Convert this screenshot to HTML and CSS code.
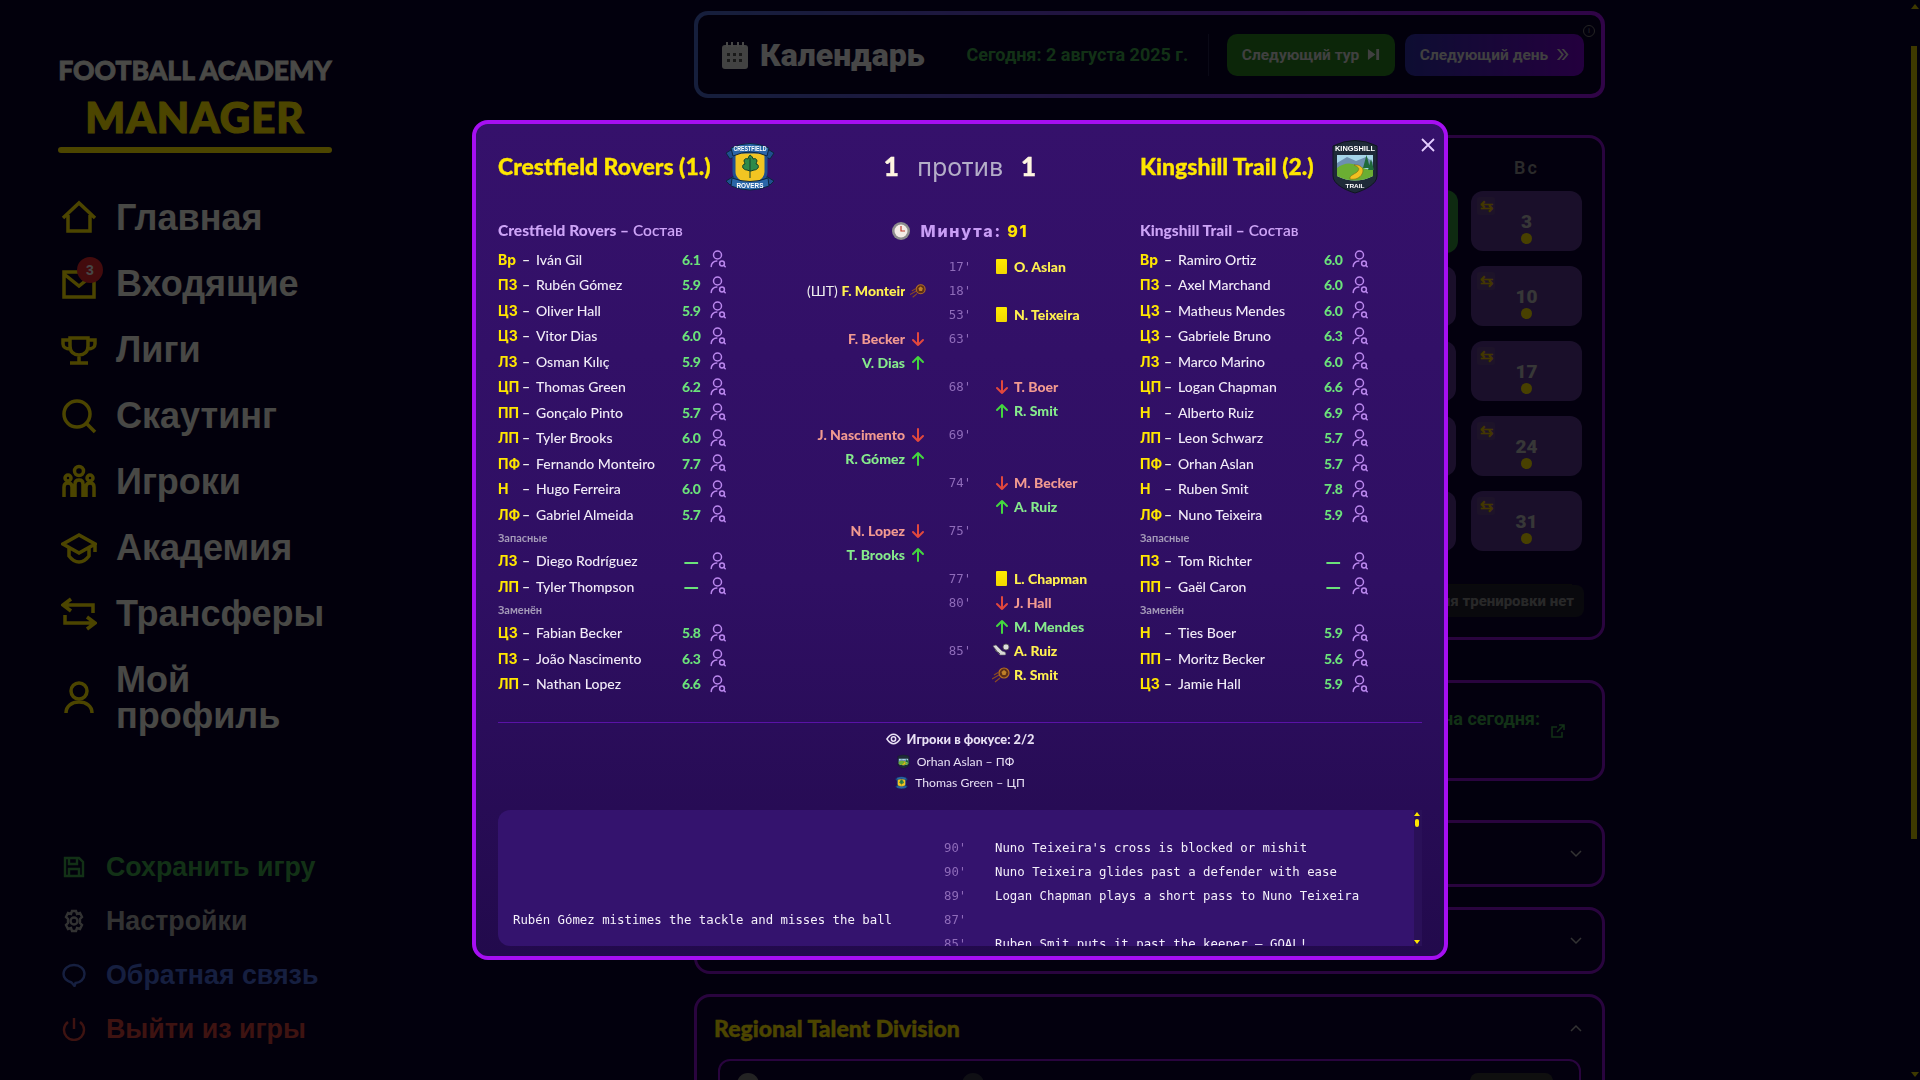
FILE: index.html
```html
<!DOCTYPE html>
<html lang="ru">
<head>
<meta charset="utf-8">
<title>Football Academy Manager</title>
<link rel="stylesheet" href="styles.css">
</head>
<body>
<svg class="defs" width="0" height="0" aria-hidden="true">
  <symbol id="crest-a" viewBox="0 0 50 52">
    <path d="M1 13 9 8v9l-4 2zM49 13l-8-5v9l4 2zM1 41l8-5v6l-4 3zM49 41l-8-5v6l4 3z" fill="#1f4f8f" stroke="#0d2540" stroke-width="1"/>
    <path d="M9 12h32v20c0 8-8 11-16 15C17 43 9 40 9 32z" fill="#f2c522" stroke="#1f4f8f" stroke-width="3"/>
    <path d="M25 15c2 1 3 3 3 4 2-1 4 0 4 2 0 1-1 2-1 3 2 0 3 2 2 4-1 1-2 2-4 2l-3 1-1 0-3-1c-2 0-3-1-4-2-1-2 0-4 2-4 0-1-1-2-1-3 0-2 2-3 4-2 0-1 1-3 2-4z" fill="#2f8a4a" stroke="#14402a" stroke-width="1"/>
    <path d="M25 18v20" stroke="#14402a" stroke-width="1"/>
    <path d="M6 8Q25 -1 44 8l-2 8Q25 8 8 16z" fill="#2a66a8" stroke="#0d2540" stroke-width="1"/>
    <path d="M7 38Q25 45 43 38l1 8Q25 54 6 46z" fill="#2a66a8" stroke="#0d2540" stroke-width="1"/>
  </symbol>
  <symbol id="crest-b" viewBox="0 0 50 56">
    <path d="M3 8Q25 -3 47 8v30c0 8-12 14-22 17C15 52 3 46 3 38z" fill="#1e2a38" stroke="#0f1620" stroke-width="1"/>
    <path d="M7 17h36v21q-18 9-36 0z" fill="#a5d4e8"/>
    <path d="M7 25l10-6 9 4 10-4 7 5v6H7z" fill="#6d8fb0"/>
    <path d="M7 30q10-8 22-2t14 2v8q-18 9-36 0z" fill="#6bae33"/>
    <path d="M33 30l3.500-13 3.500 13zM38 32l3-11 3 11z" fill="#1f6a3a"/>
    <path d="M24 27c4 2 6 3 4 6s-9 4-8 8c5 1 10-1 12-5s1-7-4-9z" fill="#f0c020" stroke="#7a5a10" stroke-width=".5"/>
  </symbol>
  <symbol id="scout" viewBox="0 0 16 18">
    <g fill="none" stroke="#bb88ee" stroke-width="1.5" stroke-linecap="round">
      <circle cx="7.500" cy="5" r="4"/>
      <path d="M1.200 16.500c0-3 2.400-5.500 5.600-5.500"/>
      <circle cx="12" cy="13.500" r="2.400"/>
      <path d="M14 15.500l1.200 1.200"/>
    </g>
  </symbol>
  <symbol id="arrow-down" viewBox="0 0 16 16"><path d="M8 2v12M3 9l5 5 5-5" fill="none" stroke="#e2483d" stroke-width="2" stroke-linecap="round" stroke-linejoin="round"/></symbol>
  <symbol id="arrow-up" viewBox="0 0 16 16"><path d="M8 14V2M3 7l5-5 5 5" fill="none" stroke="#43d63e" stroke-width="2" stroke-linecap="round" stroke-linejoin="round"/></symbol>
  <symbol id="ball" viewBox="0 0 18 16">
    <circle cx="12" cy="6" r="5" fill="#5e2f18" stroke="#b87020" stroke-width="1.200"/>
    <path d="M12 3l2.500 2-1 3h-3l-1-3z" fill="#c08028"/>
    <path d="M7 5 2 8M7 8 0 12M8 11l-5 4" stroke="#8a4a20" stroke-width="1.200" fill="none"/>
  </symbol>
  <symbol id="boot" viewBox="0 0 18 16">
    <path d="M1 3l3-1 6 6 3 1c1 1 1 3 0 3H8z" fill="#d8d8d8" stroke="#666" stroke-width=".6"/>
    <circle cx="14" cy="4" r="3" fill="#ddd" stroke="#555" stroke-width=".8"/>
    <path d="M3 7l2 2M6 9l2 2" stroke="#555" stroke-width="1"/>
  </symbol>
</svg>

<div class="app">
  <aside class="sidebar">
    <div class="logo">
      <div class="logo-top">FOOTBALL ACADEMY</div>
      <div class="logo-main">MANAGER</div>
      <div class="logo-line"></div>
    </div>
    <nav class="nav">
      <a class="nav-item"><svg class="nav-ico" viewBox="0 0 36 36"><path d="M2 18 18 3l16 15M7 15v16h22V15" /></svg><span>Главная</span></a>
      <a class="nav-item"><span class="ico-wrap"><svg class="nav-ico" viewBox="0 0 36 36"><path d="M3 6h30v25H3zM3 8l15 12L33 8"/></svg><span class="badge">3</span></span><span>Входящие</span></a>
      <a class="nav-item"><svg class="nav-ico" viewBox="0 0 36 36"><path d="M9 6h18v8c0 6-4 9-9 9s-9-3-9-9zM9 8H2v4c0 3 3 5 7 5M27 8h7v4c0 3-3 5-7 5M18 23v7M9 31h18"/></svg><span>Лиги</span></a>
      <a class="nav-item"><svg class="nav-ico" viewBox="0 0 36 36"><circle cx="16" cy="16" r="13"/><path d="M26 26l8 8"/></svg><span>Скаутинг</span></a>
      <a class="nav-item"><svg class="nav-ico" viewBox="0 0 36 36"><circle cx="18" cy="7" r="4.500"/><circle cx="7" cy="14" r="3"/><circle cx="29" cy="14" r="3"/><path d="M3 33V23q0-4 4-4t4 4v10M14 33V20q0-4 4-4t4 4v13M25 33V23q0-4 4-4t4 4v10"/></svg><span>Игроки</span></a>
      <a class="nav-item"><svg class="nav-ico" viewBox="0 0 36 36"><path d="M18 5 2 14l16 9 16-9zM8 18v8c3 4 7 6 10 6s7-2 10-6v-8M34 14v8"/></svg><span>Академия</span></a>
      <a class="nav-item"><svg class="nav-ico" viewBox="0 0 36 36"><path d="M10 3 2 9l8 6M3 9h29v8M26 21l8 6-8 6M33 27H4v-8"/></svg><span>Трансферы</span></a>
      <a class="nav-item"><svg class="nav-ico" viewBox="0 0 36 36"><circle cx="18" cy="11" r="8"/><path d="M5 33c0-7 6-11 13-11s13 4 13 11"/></svg><span>Мой<br>профиль</span></a>
    </nav>
    <nav class="nav-bottom">
      <a class="sub-item tone-green"><svg class="sub-ico" viewBox="0 0 24 24"><path d="M3 3h14l4 4v14H3zM7 3v6h8V3M7 21v-7h10v7"/></svg><span>Сохранить игру</span></a>
      <a class="sub-item tone-grey"><svg class="sub-ico" viewBox="0 0 24 24"><circle cx="12" cy="12" r="3.500"/><path d="M10 2h4l1 3 3-1 2 4-2 2v4l2 2-2 4-3-1-1 3h-4l-1-3-3 1-2-4 2-2v-4L4 8l2-4 3 1z"/></svg><span>Настройки</span></a>
      <a class="sub-item tone-blue"><svg class="sub-ico" viewBox="0 0 24 24"><path d="M12 2c6 0 10.500 4 10.500 9s-4.500 9-9 9l-1 3-3-3.500C5 18 1.500 15 1.500 11 1.500 6 6 2 12 2z"/></svg><span>Обратная связь</span></a>
      <a class="sub-item tone-red"><svg class="sub-ico" viewBox="0 0 24 24"><path d="M12 1v11M6 5a10 10 0 1 0 12 0"/></svg><span>Выйти из игры</span></a>
    </nav>
  </aside>

  <main class="main">
    <header class="cal-head">
      <svg class="cal-ico" viewBox="0 0 26 28"><path d="M3 4h20a3 3 0 0 1 3 3v18a3 3 0 0 1-3 3H3a3 3 0 0 1-3-3V7a3 3 0 0 1 3-3z" fill="#ddd"/><path d="M5 1v5M10 1v5M16 1v5M21 1v5" stroke="#eee" stroke-width="2"/><path d="M5 12h3v3H5zM11 12h3v3h-3zM17 12h3v3h-3zM5 18h3v3H5zM11 18h3v3h-3zM17 18h3v3h-3z" fill="#555"/></svg>
      <h1 class="cal-title">Календарь</h1>
      <div class="cal-date">Сегодня: 2 августа 2025 г.</div>
      <div class="cal-sep"></div>
      <button class="btn btn-green">Следующий тур <svg class="btn-ico" viewBox="0 0 14 14"><path d="M1 1l8 6-8 6zM10 1h3v12h-3z"/></svg></button>
      <button class="btn btn-violet">Следующий день <svg class="btn-ico" viewBox="0 0 14 14"><path d="M1 1l5 6-5 6h2.500l5-6-5-6zM6 1l5 6-5 6h2.500l5-6-5-6z"/></svg></button>
      <span class="info">i</span>
    </header>

    <section class="card cal-card">
      <div class="week"><span></span><span></span><span></span><span></span><span></span><span></span><span>Вс</span></div>
      <div class="days">
        <div class="day"></div><div class="day"></div><div class="day"></div><div class="day"></div><div class="day"></div><div class="day day-today"></div><div class="day"><i class="swap">⇆</i><b>3</b><u></u></div>
        <div class="day"></div><div class="day"></div><div class="day"></div><div class="day"></div><div class="day"></div><div class="day"></div><div class="day"><i class="swap">⇆</i><b>10</b><u></u></div>
        <div class="day"></div><div class="day"></div><div class="day"></div><div class="day"></div><div class="day"></div><div class="day"></div><div class="day"><i class="swap">⇆</i><b>17</b><u></u></div>
        <div class="day"></div><div class="day"></div><div class="day"></div><div class="day"></div><div class="day"></div><div class="day"></div><div class="day"><i class="swap">⇆</i><b>24</b><u></u></div>
        <div class="day"></div><div class="day"></div><div class="day"></div><div class="day"></div><div class="day"></div><div class="day"></div><div class="day"><i class="swap">⇆</i><b>31</b><u></u></div>
      </div>
      <div class="no-train">На сегодня тренировки нет</div>
    </section>

    <section class="card today-card">
      <span class="today-text">Матчи на сегодня:</span>
      <svg class="ext-ico" viewBox="0 0 16 16"><path d="M12 9v5H2V4h5M9 2h5v5M14 2 7 9"/></svg>
    </section>
    <section class="card fold-card fold-a"><svg class="chev" viewBox="0 0 12 8"><path d="M1 1l5 5 5-5"/></svg></section>
    <section class="card fold-card fold-b"><svg class="chev" viewBox="0 0 12 8"><path d="M1 1l5 5 5-5"/></svg></section>
    <section class="card region">
      <div class="region-head"><h2>Regional Talent Division</h2><svg class="chev" viewBox="0 0 12 8"><path d="M1 7l5-5 5 5"/></svg></div>
      <div class="region-inner">
        <span class="dot-av"></span><span class="dot-av dot-av2"></span><span class="pill"></span>
      </div>
    </section>
  </main>
  <div class="page-scroll"><span class="ps-up"></span><span class="ps-thumb"></span><span class="ps-down"></span></div>
</div>

<div class="overlay">
  <div class="modal">
    <button class="close" aria-label="Закрыть"><svg viewBox="0 0 16 16"><path d="M2 2l12 12M14 2 2 14"/></svg></button>

    <div class="match-head">
      <div class="team-head"><span class="team-name">Crestfield Rovers (1.)</span>
        <svg class="crest" viewBox="0 0 50 52"><use href="#crest-a" width="50" height="52"/><text x="25" y="11" class="crest-t" font-size="6.400" textLength="33" lengthAdjust="spacingAndGlyphs">CRESTFIELD</text><text x="25" y="48" class="crest-t" font-size="7.400" textLength="27" lengthAdjust="spacingAndGlyphs">ROVERS</text></svg></div>
      <div class="score"><b>1</b><span>против</span><b>1</b></div>
      <div class="team-head"><span class="team-name">Kingshill Trail (2.)</span>
        <svg class="crest crest-k" viewBox="0 0 50 56"><use href="#crest-b" width="50" height="56"/><text x="25" y="13" class="crest-t" font-size="7.600" textLength="40" lengthAdjust="spacingAndGlyphs">KINGSHILL</text><text x="25" y="50" class="crest-t" font-size="5.600" textLength="19" lengthAdjust="spacingAndGlyphs">TRAIL</text></svg></div>
    </div>

    <div class="match-body">
      <div class="lineup">
        <h3><b>Crestfield Rovers –</b> Состав</h3>
        <div class="pl"><em>Вр</em><i>–</i><span>Iván Gil</span><b>6.1</b><svg><use href="#scout"/></svg></div>
        <div class="pl"><em>ПЗ</em><i>–</i><span>Rubén Gómez</span><b>5.9</b><svg><use href="#scout"/></svg></div>
        <div class="pl"><em>ЦЗ</em><i>–</i><span>Oliver Hall</span><b>5.9</b><svg><use href="#scout"/></svg></div>
        <div class="pl"><em>ЦЗ</em><i>–</i><span>Vitor Dias</span><b>6.0</b><svg><use href="#scout"/></svg></div>
        <div class="pl"><em>ЛЗ</em><i>–</i><span>Osman Kılıç</span><b>5.9</b><svg><use href="#scout"/></svg></div>
        <div class="pl"><em>ЦП</em><i>–</i><span>Thomas Green</span><b>6.2</b><svg><use href="#scout"/></svg></div>
        <div class="pl"><em>ПП</em><i>–</i><span>Gonçalo Pinto</span><b>5.7</b><svg><use href="#scout"/></svg></div>
        <div class="pl"><em>ЛП</em><i>–</i><span>Tyler Brooks</span><b>6.0</b><svg><use href="#scout"/></svg></div>
        <div class="pl"><em>ПФ</em><i>–</i><span>Fernando Monteiro</span><b>7.7</b><svg><use href="#scout"/></svg></div>
        <div class="pl"><em>Н</em><i>–</i><span>Hugo Ferreira</span><b>6.0</b><svg><use href="#scout"/></svg></div>
        <div class="pl"><em>ЛФ</em><i>–</i><span>Gabriel Almeida</span><b>5.7</b><svg><use href="#scout"/></svg></div>
        <h4>Запасные</h4>
        <div class="pl"><em>ЛЗ</em><i>–</i><span>Diego Rodríguez</span><b class="none">—</b><svg><use href="#scout"/></svg></div>
        <div class="pl"><em>ЛП</em><i>–</i><span>Tyler Thompson</span><b class="none">—</b><svg><use href="#scout"/></svg></div>
        <h4>Заменён</h4>
        <div class="pl"><em>ЦЗ</em><i>–</i><span>Fabian Becker</span><b>5.8</b><svg><use href="#scout"/></svg></div>
        <div class="pl"><em>ПЗ</em><i>–</i><span>João Nascimento</span><b>6.3</b><svg><use href="#scout"/></svg></div>
        <div class="pl"><em>ЛП</em><i>–</i><span>Nathan Lopez</span><b>6.6</b><svg><use href="#scout"/></svg></div>
      </div>

      <div class="events">
        <div class="minute-title"><svg class="clock" viewBox="0 0 18 18"><circle cx="9" cy="9" r="9" fill="#8d8d8d"/><circle cx="9" cy="9" r="6.500" fill="#f3ece6"/><path d="M9 4v5h4" stroke="#c0392b" stroke-width="1.200" fill="none"/></svg><span>Минута: <b>91</b></span></div>
        <div class="ev-grid">
          <div class="ev-l"></div><div class="ev-m">17'</div><div class="ev-r"><span class="ycard"></span><span class="t-yellow">O. Aslan</span></div>
          <div class="ev-l"><span class="clip"><small>(ШТ) </small><span class="t-yellow">F. Monteiro</span></span><svg class="ev-ico"><use href="#ball"/></svg></div><div class="ev-m">18'</div><div class="ev-r"></div>
          <div class="ev-l"></div><div class="ev-m">53'</div><div class="ev-r"><span class="ycard"></span><span class="t-yellow">N. Teixeira</span></div>
          <div class="ev-l"><span class="t-off">F. Becker</span><svg class="ev-ico"><use href="#arrow-down"/></svg></div><div class="ev-m">63'</div><div class="ev-r"></div>
          <div class="ev-l"><span class="t-on">V. Dias</span><svg class="ev-ico"><use href="#arrow-up"/></svg></div><div class="ev-m"></div><div class="ev-r"></div>
          <div class="ev-l"></div><div class="ev-m">68'</div><div class="ev-r"><svg class="ev-ico"><use href="#arrow-down"/></svg><span class="t-off">T. Boer</span></div>
          <div class="ev-l"></div><div class="ev-m"></div><div class="ev-r"><svg class="ev-ico"><use href="#arrow-up"/></svg><span class="t-on">R. Smit</span></div>
          <div class="ev-l"><span class="t-off">J. Nascimento</span><svg class="ev-ico"><use href="#arrow-down"/></svg></div><div class="ev-m">69'</div><div class="ev-r"></div>
          <div class="ev-l"><span class="t-on">R. Gómez</span><svg class="ev-ico"><use href="#arrow-up"/></svg></div><div class="ev-m"></div><div class="ev-r"></div>
          <div class="ev-l"></div><div class="ev-m">74'</div><div class="ev-r"><svg class="ev-ico"><use href="#arrow-down"/></svg><span class="t-off">M. Becker</span></div>
          <div class="ev-l"></div><div class="ev-m"></div><div class="ev-r"><svg class="ev-ico"><use href="#arrow-up"/></svg><span class="t-on">A. Ruiz</span></div>
          <div class="ev-l"><span class="t-off">N. Lopez</span><svg class="ev-ico"><use href="#arrow-down"/></svg></div><div class="ev-m">75'</div><div class="ev-r"></div>
          <div class="ev-l"><span class="t-on">T. Brooks</span><svg class="ev-ico"><use href="#arrow-up"/></svg></div><div class="ev-m"></div><div class="ev-r"></div>
          <div class="ev-l"></div><div class="ev-m">77'</div><div class="ev-r"><span class="ycard"></span><span class="t-yellow">L. Chapman</span></div>
          <div class="ev-l"></div><div class="ev-m">80'</div><div class="ev-r"><svg class="ev-ico"><use href="#arrow-down"/></svg><span class="t-off">J. Hall</span></div>
          <div class="ev-l"></div><div class="ev-m"></div><div class="ev-r"><svg class="ev-ico"><use href="#arrow-up"/></svg><span class="t-on">M. Mendes</span></div>
          <div class="ev-l"></div><div class="ev-m">85'</div><div class="ev-r"><svg class="ev-ico ev-wide"><use href="#boot"/></svg><span class="t-yellow">A. Ruiz</span></div>
          <div class="ev-l"></div><div class="ev-m"></div><div class="ev-r"><svg class="ev-ico ev-wide"><use href="#ball"/></svg><span class="t-yellow">R. Smit</span></div>
        </div>
      </div>

      <div class="lineup">
        <h3><b>Kingshill Trail –</b> Состав</h3>
        <div class="pl"><em>Вр</em><i>–</i><span>Ramiro Ortiz</span><b>6.0</b><svg><use href="#scout"/></svg></div>
        <div class="pl"><em>ПЗ</em><i>–</i><span>Axel Marchand</span><b>6.0</b><svg><use href="#scout"/></svg></div>
        <div class="pl"><em>ЦЗ</em><i>–</i><span>Matheus Mendes</span><b>6.0</b><svg><use href="#scout"/></svg></div>
        <div class="pl"><em>ЦЗ</em><i>–</i><span>Gabriele Bruno</span><b>6.3</b><svg><use href="#scout"/></svg></div>
        <div class="pl"><em>ЛЗ</em><i>–</i><span>Marco Marino</span><b>6.0</b><svg><use href="#scout"/></svg></div>
        <div class="pl"><em>ЦП</em><i>–</i><span>Logan Chapman</span><b>6.6</b><svg><use href="#scout"/></svg></div>
        <div class="pl"><em>Н</em><i>–</i><span>Alberto Ruiz</span><b>6.9</b><svg><use href="#scout"/></svg></div>
        <div class="pl"><em>ЛП</em><i>–</i><span>Leon Schwarz</span><b>5.7</b><svg><use href="#scout"/></svg></div>
        <div class="pl"><em>ПФ</em><i>–</i><span>Orhan Aslan</span><b>5.7</b><svg><use href="#scout"/></svg></div>
        <div class="pl"><em>Н</em><i>–</i><span>Ruben Smit</span><b>7.8</b><svg><use href="#scout"/></svg></div>
        <div class="pl"><em>ЛФ</em><i>–</i><span>Nuno Teixeira</span><b>5.9</b><svg><use href="#scout"/></svg></div>
        <h4>Запасные</h4>
        <div class="pl"><em>ПЗ</em><i>–</i><span>Tom Richter</span><b class="none">—</b><svg><use href="#scout"/></svg></div>
        <div class="pl"><em>ПП</em><i>–</i><span>Gaël Caron</span><b class="none">—</b><svg><use href="#scout"/></svg></div>
        <h4>Заменён</h4>
        <div class="pl"><em>Н</em><i>–</i><span>Ties Boer</span><b>5.9</b><svg><use href="#scout"/></svg></div>
        <div class="pl"><em>ПП</em><i>–</i><span>Moritz Becker</span><b>5.6</b><svg><use href="#scout"/></svg></div>
        <div class="pl"><em>ЦЗ</em><i>–</i><span>Jamie Hall</span><b>5.9</b><svg><use href="#scout"/></svg></div>
      </div>
    </div>

    <div class="focus">
      <div class="focus-title"><svg viewBox="0 0 16 12"><path d="M1 6c2-3 4.500-5 7-5s5 2 7 5c-2 3-4.500 5-7 5S3 9 1 6z"/><circle cx="8" cy="6" r="2.300"/></svg>Игроки в фокусе: 2/2</div>
      <div class="focus-row focus-first"><svg viewBox="0 0 50 56"><use href="#crest-b" width="50" height="56"/></svg><span>Orhan Aslan – ПФ</span></div>
      <div class="focus-row"><svg viewBox="0 0 50 52"><use href="#crest-a" width="50" height="52"/></svg><span>Thomas Green – ЦП</span></div>
    </div>

    <div class="log">
      <div class="log-rows">
        <div class="lg-l"></div><div class="lg-m">90'</div><div class="lg-r">Nuno Teixeira's cross is blocked or mishit</div>
        <div class="lg-l"></div><div class="lg-m">90'</div><div class="lg-r">Nuno Teixeira glides past a defender with ease</div>
        <div class="lg-l"></div><div class="lg-m">89'</div><div class="lg-r">Logan Chapman plays a short pass to Nuno Teixeira</div>
        <div class="lg-l">Rubén Gómez mistimes the tackle and misses the ball</div><div class="lg-m">87'</div><div class="lg-r"></div>
        <div class="lg-l"></div><div class="lg-m">85'</div><div class="lg-r">Ruben Smit puts it past the keeper — GOAL!</div>
      </div>
      <div class="log-bar"><span class="lb-up"></span><span class="lb-thumb"></span><span class="lb-down"></span></div>
    </div>
  </div>
</div>
</body>
</html>
```

FILE: styles.css
```css
* { box-sizing: border-box; }
html, body { margin: 0; height: 100%; overflow: hidden; }
body { font-family: Roboto, "Liberation Sans", sans-serif; background: #09002e; color: #f0f0e8; }
.defs { position: absolute; }
.crest-t { font-family: "Liberation Sans", sans-serif; font-weight: 700; fill: #fff; text-anchor: middle; }

.app { display: flex; height: 1080px; }

/* Sidebar */
.sidebar { width: 390px; flex: none; display: flex; flex-direction: column; padding: 53px 58px 24px; background: #07002a; }
.logo { text-align: center; }
.logo-top { font-family: Lato, sans-serif; font-weight: 900; font-size: 26.500px; line-height: 34px; white-space: nowrap; -webkit-text-stroke: .8px #f4f4ec; color: #f4f4ec; }
.logo-main { font-family: Lato, sans-serif; font-weight: 900; font-size: 42px; line-height: 48px; margin-top: 6px; letter-spacing: 1px; -webkit-text-stroke: 1.200px #ffe600; color: #ffe600; }
.logo-line { height: 6px; margin-top: 6px; border-radius: 3px; background: #ffe600; }
.nav { margin-top: 32px; }
.nav-item { display: flex; align-items: center; gap: 19px; padding: 15px 0 15px 3px; font-family: "Liberation Sans", sans-serif; font-size: 36px; line-height: 36px; font-weight: 700; color: #f0f0e8; white-space: nowrap; }
.nav-ico { width: 36px; height: 36px; flex: none; fill: none; stroke: #ffe600; stroke-width: 3.500; }
.ico-wrap { position: relative; display: flex; }
.badge { position: absolute; left: 16px; top: -9px; width: 26px; height: 26px; border-radius: 50%; background: #e0262c; font-size: 14px; line-height: 26px; text-align: center; font-weight: 700; color: #eee; }
.nav-bottom { margin-top: auto; }
.sub-item { display: flex; align-items: center; gap: 20px; height: 54px; padding-left: 4px; font-family: "Liberation Sans", sans-serif; font-size: 26.800px; font-weight: 700; white-space: nowrap; }
.sub-ico { width: 24px; height: 24px; flex: none; fill: none; stroke: currentColor; stroke-width: 2.400; }
.tone-green { color: #3fa54a; }
.tone-grey { color: #a8a8a8; }
.tone-blue { color: #4a6ad6; }
.tone-red { color: #d0403a; }

/* Main */
.main { flex: 1; padding: 11px 2px 0 0; display: flex; flex-direction: column; align-items: center; min-width: 0; }
.main > * { width: 911px; flex: none; }
.cal-head { position: relative; height: 87px; display: flex; align-items: center; padding: 0 17px 0 24px; border: 4px solid transparent; border-radius: 14px;
  background: linear-gradient(#08002a, #08002a) padding-box, linear-gradient(90deg, #4a68c8, #a10fef) border-box; }
.cal-ico { width: 26px; height: 28px; flex: none; }
.cal-title { margin: 0 0 0 12px; font-size: 32px; font-weight: 900; line-height: 36px; color: #eee; }
.cal-date { margin-left: 42px; font-size: 18px; font-weight: 700; color: #3fa54a; white-space: nowrap; }
.cal-sep { width: 1px; height: 42px; margin: 0 18px 0 auto; background: #24204a; }
.btn { height: 42px; flex: none; display: flex; align-items: center; justify-content: center; gap: 8px; border: 0; border-radius: 10px; font: 700 15.500px Roboto, sans-serif; color: #d8d8d8; white-space: nowrap; }
.btn-green { width: 168px; background: #288020; }
.btn-violet { width: 179px; margin-left: 10px; background: linear-gradient(90deg, #2e2ea8, #7800d0); }
.btn-ico { width: 13px; height: 13px; fill: #d8d8d8; }
.info { position: absolute; right: 6px; top: 10px; width: 12px; height: 12px; border: 1px solid #777; border-radius: 50%; font-size: 8px; line-height: 10px; text-align: center; color: #888; }

.card { border: 3px solid #8a10d0; border-radius: 16px; background: #0b0030; }
.cal-card { height: 505px; margin-top: 37px; padding: 0 20px 0 18px; }
.week { display: grid; grid-template-columns: repeat(7, 111px); gap: 15px; height: 56px; padding-top: 3px; margin-bottom: -3px; align-items: center; text-align: center; font-size: 18px; letter-spacing: 2px; color: #8c8c8c; font-weight: 600; }
.days { display: grid; grid-template-columns: repeat(7, 111px); grid-auto-rows: 60px; gap: 15px; }
.day { position: relative; display: flex; flex-direction: column; align-items: center; padding-top: 19px; border-radius: 12px; background: #57358c; }
.day b { font-size: 19px; line-height: 24px; font-weight: 900; color: #b8b8b8; }
.day u { width: 11px; height: 11px; margin-top: -1px; border-radius: 50%; background: #f0d800; }
.day-today { margin: -1px -2px -2px 0; background: #2f8c3a; }
.swap { position: absolute; left: 6px; top: 6px; width: 18px; height: 18px; border-radius: 3px; background: #63408a; font-style: normal; font-size: 16px; font-weight: 700; line-height: 18px; text-align: center; color: #e0b800; }
.no-train { margin: 34px -2px 0 auto; width: 500px; height: 32px; padding-right: 10px; border-radius: 8px; background: #1e1e2e; font-size: 15px; font-weight: 800; line-height: 32px; text-align: right; color: #888; box-shadow: 0 -13px 0 -12px #222; }

.today-card { height: 101px; margin-top: 40px; padding: 25px 62px 0 0; text-align: right; position: relative; }
.today-text { font-size: 18px; font-weight: 700; color: #3fa54a; }
.ext-ico { position: absolute; right: 36px; top: 40px; width: 16px; height: 16px; fill: none; stroke: #3fa54a; stroke-width: 1.500; }
.fold-card { height: 67px; display: flex; align-items: center; justify-content: flex-end; padding-right: 20px; }
.fold-a { margin-top: 39px; }
.fold-b { margin-top: 20px; }
.chev { width: 12px; height: 8px; fill: none; stroke: #aaa; stroke-width: 1.500; }
.region { height: 200px; margin-top: 20px; padding: 0 21px; }
.region-head { display: flex; align-items: center; justify-content: space-between; height: 62px; margin-right: -1px; }
.region-head h2 { margin: 0 0 0 -4px; font-family: Lato, sans-serif; font-weight: 900; font-size: 23px; -webkit-text-stroke: .4px #ffe600; color: #ffe600; }
.region-inner { position: relative; height: 100px; border: 2px solid #8a10d0; border-radius: 12px; }
.dot-av { position: absolute; left: 17px; top: 12px; width: 22px; height: 22px; border-radius: 50%; background: #777; }
.dot-av2 { left: 242px; background: #334; }
.pill { position: absolute; left: 750px; top: 12px; width: 83px; height: 30px; border-radius: 8px; background: #333; }

.page-scroll { position: relative; width: 9px; flex: none; }
.ps-thumb { position: absolute; left: 0; top: 46px; width: 6px; height: 793px; background: #d0c000; }
.ps-up, .ps-down { position: absolute; left: 0; border-left: 4px solid transparent; border-right: 4px solid transparent; }
.ps-up { top: 4px; border-bottom: 5px solid #d0c000; }
.ps-down { bottom: 3px; border-top: 5px solid #d0c000; }

/* Overlay and modal */
.overlay { position: fixed; inset: 0; display: flex; align-items: center; justify-content: center; background: rgba(0,0,0,.7); }
.modal { position: relative; width: 976px; height: 840px; display: flex; flex-direction: column; padding: 14px 22px 10px; border: 4px solid #a60ff2; border-radius: 16px; background: linear-gradient(#35116b 0, #2f0f63 55%, #220a4c 100%); font-family: Lato, Roboto, sans-serif; }
.close { position: absolute; right: 8px; top: 13px; width: 16px; height: 16px; padding: 0; border: 0; background: none; }
.close svg { display: block; width: 16px; height: 16px; fill: none; stroke: #e4ccff; stroke-width: 1.800; }

.match-head { display: grid; grid-template-columns: 282px 1fr 282px; height: 56px; align-items: center; }
.team-head { display: flex; align-items: center; gap: 14px; white-space: nowrap; }
.team-name { font-size: 23px; font-weight: 900; -webkit-text-stroke: .3px #ffe600; color: #ffe600; }
.crest { width: 50px; height: 52px; flex: none; }
.crest-k { height: 56px; margin-left: 2px; }
.score { display: flex; align-items: center; justify-content: center; gap: 18px; }
.score b { font-size: 26px; font-weight: 900; -webkit-text-stroke: .4px #fff6e0; color: #fff6e0; }
.score span { font-family: "Noto Sans", sans-serif; font-size: 25px; color: #b4aec8; }

.match-body { display: grid; grid-template-columns: 282px 1fr 282px; margin-top: 26px; }
.lineup h3 { margin: 0 0 6.500px; height: 20px; font-size: 15.500px; line-height: 20px; font-weight: 600; color: #cda4f7; white-space: nowrap; }
.lineup h3 b { font-weight: 900; }
.lineup h4 { margin: 0; height: 21px; font-size: 11px; line-height: 21px; font-weight: 700; color: #a49ab8; }
.pl { display: grid; grid-template-columns: 24px 14px 1fr 18px 10px 16px; width: 228px; height: 25.500px; align-items: center; font-size: 14px; white-space: nowrap; }
.pl em { font-style: normal; font-weight: 700; color: #ffe600; font-family: Inter, sans-serif; font-size: 14px; }
.pl i { font-style: normal; font-weight: 700; color: #eee; }
.pl span { color: #f2ecf8; font-weight: 500; }
.pl b { font-weight: 900; letter-spacing: -.4px; color: #6be27a; text-align: center; }
.pl b.none { font-size: 20px; line-height: 20px; }
.pl svg { grid-column: 6; width: 16px; height: 18px; }

.events { display: flex; flex-direction: column; }
.minute-title { height: 22px; display: flex; align-items: center; justify-content: center; gap: 11px; margin-bottom: 12.500px; font-family: Inter, sans-serif; font-size: 16px; font-weight: 800; letter-spacing: 1.800px; color: #c89df5; }
.minute-title b { color: #ffe600; font-weight: 800; }
.clock { width: 18px; height: 18px; }
.ev-grid { display: grid; grid-template-columns: 1fr 40px 1fr; grid-auto-rows: 24px; align-items: center; font-size: 14px; font-weight: 900; white-space: nowrap; }
.ev-l { display: flex; justify-content: flex-end; align-items: center; gap: 5px; padding-right: 14px; }
.ev-r { display: flex; align-items: center; gap: 4px; padding-left: 14px; }
.ev-m { text-align: center; font: 12.400px "DejaVu Sans Mono", monospace; color: #8f6cba; }
.ev-ico { width: 16px; height: 16px; flex: none; }
.ev-wide { width: 18px; margin-left: -2px; }
.ycard { width: 11px; height: 15px; margin: 0 3px 0 2px; border-radius: 1px; background: linear-gradient(#ffea00, #f2d800); }
.clip { display: inline-block; width: 98px; overflow: hidden; }
.clip small { font-size: 14px; font-weight: 400; color: #eee; }
.t-yellow { color: #fff050; }
.t-off { color: #f29a90; }
.t-on { color: #86ea8c; }

.focus { margin-top: 25.500px; padding-top: 6px; height: 87.500px; border-top: 1px solid #5a12a8; display: flex; flex-direction: column; align-items: center; font-size: 12.200px; color: #e8e0f4; }
.focus-title { display: flex; align-items: center; gap: 6px; height: 20px; margin-bottom: 2px; font-size: 12.800px; font-weight: 900; }
.focus-title svg { width: 15px; height: 12px; fill: none; stroke: #e8e0f4; stroke-width: 1.600; }
.focus-row { display: flex; align-items: center; gap: 7px; height: 21px; }
.focus-first { margin-right: 9px; }
.focus-row svg { width: 13px; height: 15px; }

.log { flex: 1; min-height: 0; display: flex; border-radius: 12px 0 0 12px; overflow: hidden; }
.log-rows { flex: 1; display: grid; grid-template-columns: 1fr 78px 1fr; grid-auto-rows: 24px; align-items: center; padding-top: 26.500px; background: #34136e; font: 12.350px "DejaVu Sans Mono", monospace; color: #f4f0fa; white-space: nowrap; overflow: hidden; }
.lg-l { text-align: right; padding-right: 25px; }
.lg-m { text-align: left; padding-left: 27px; color: #8f6cba; }
.log-bar { position: relative; width: 8px; flex: none; background: #2a1058; }
.lb-thumb { position: absolute; left: 1px; top: 9px; width: 4px; height: 8px; border-radius: 2px; background: #ffe600; }
.lb-up, .lb-down { position: absolute; left: 0; border-left: 3px solid transparent; border-right: 3px solid transparent; }
.lb-up { top: 2px; border-bottom: 4px solid #ffe600; }
.lb-down { bottom: 2px; border-top: 4px solid #ffe600; }
```
